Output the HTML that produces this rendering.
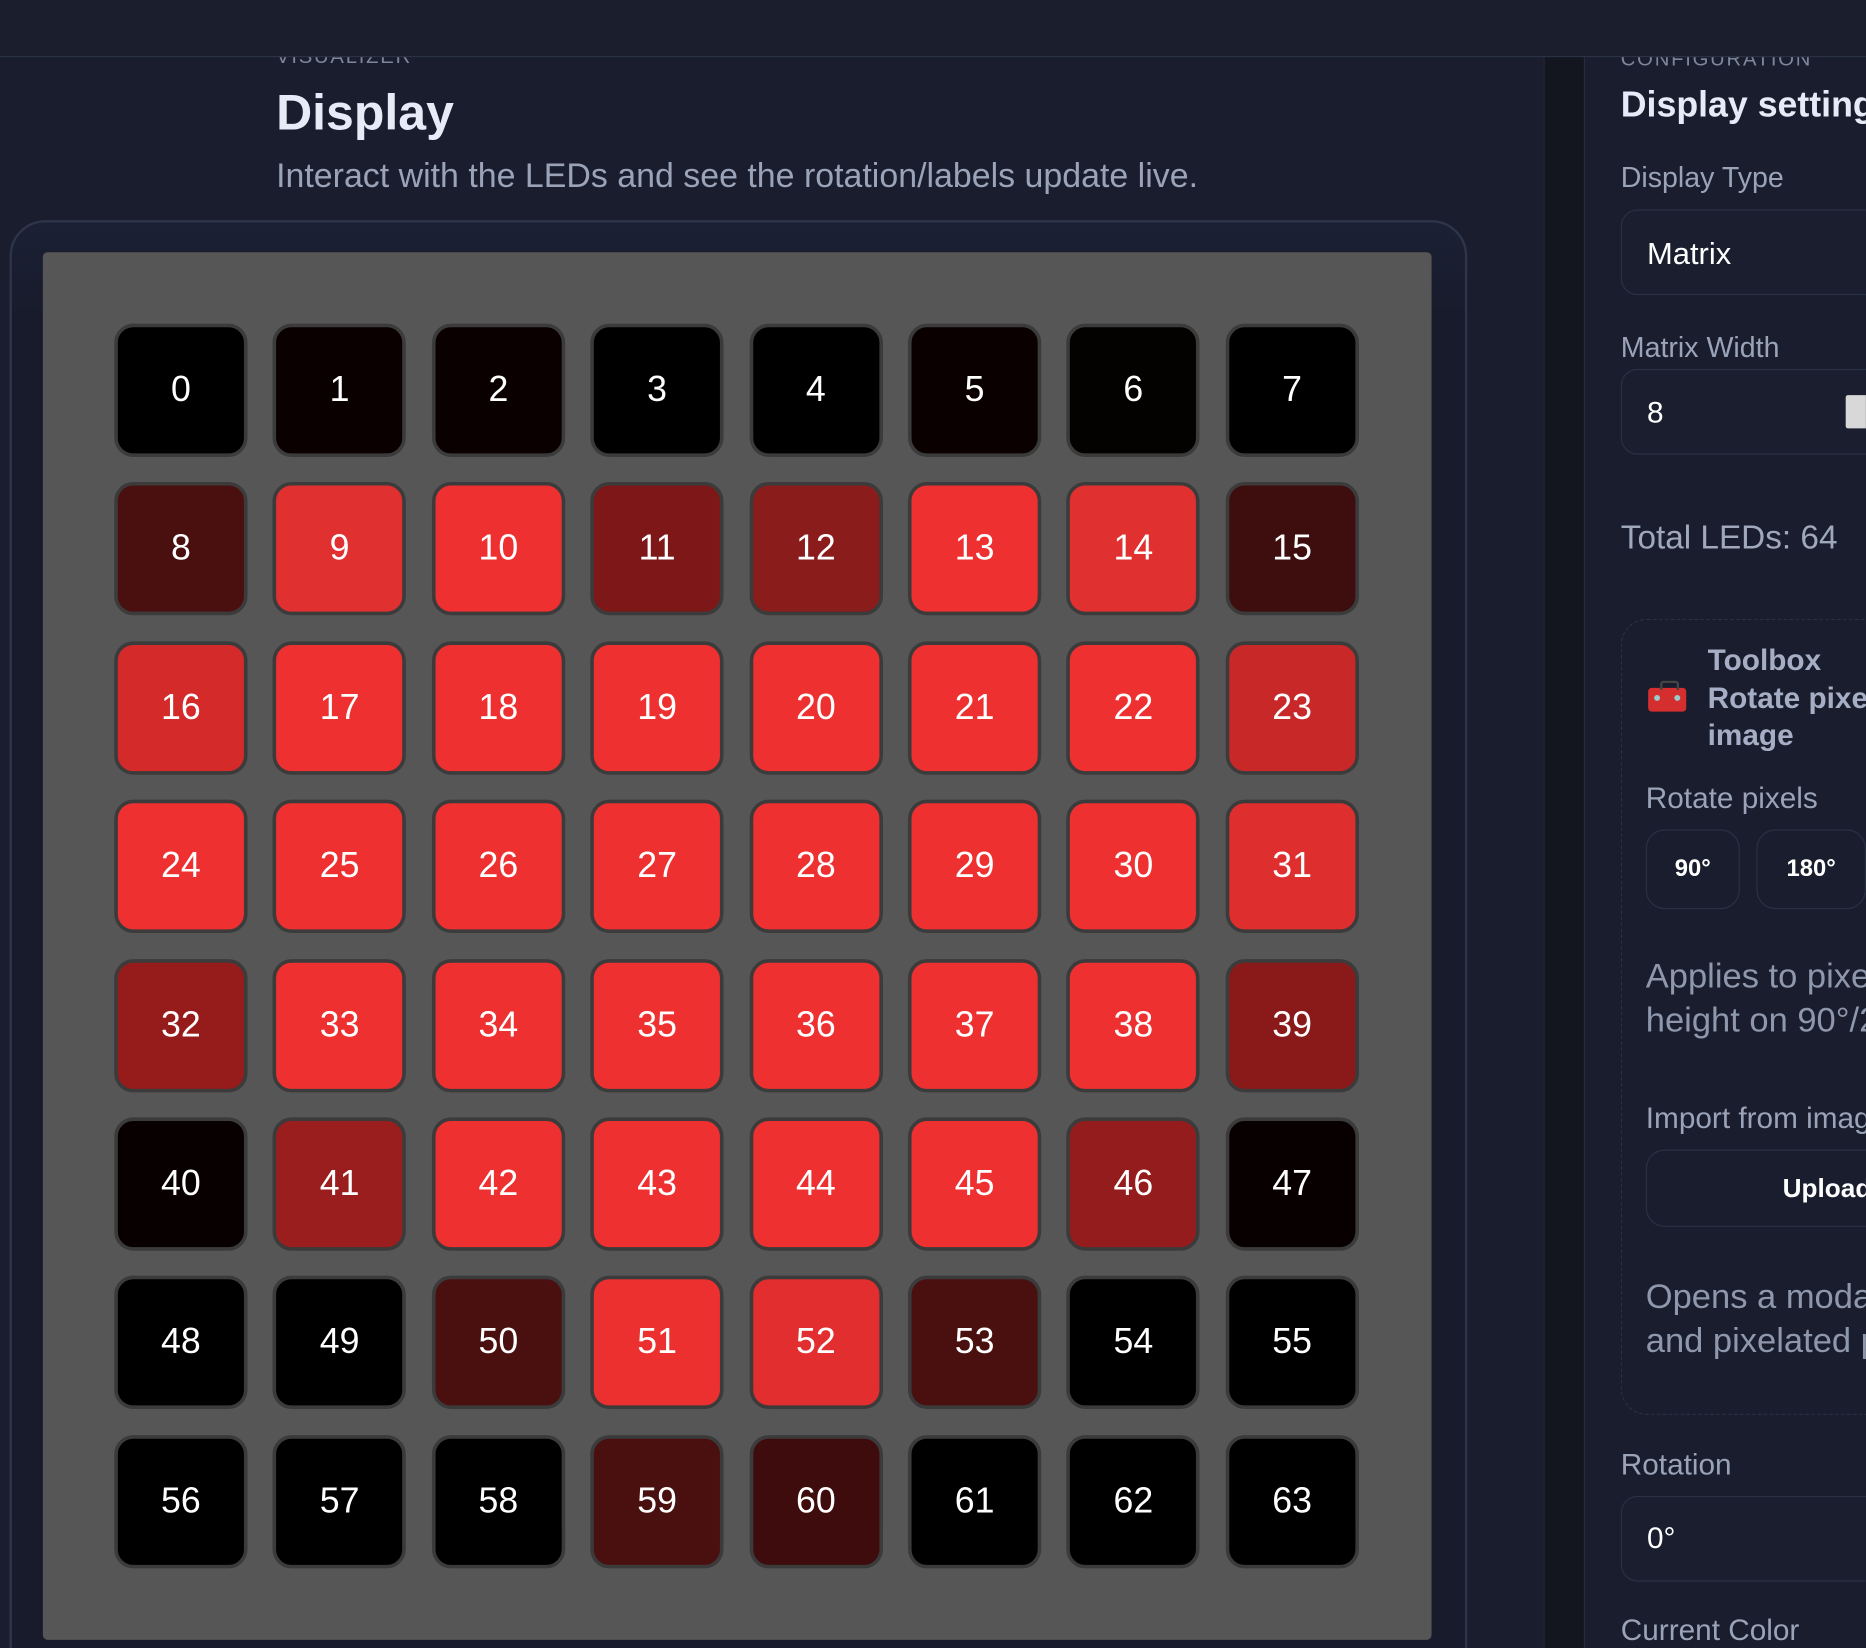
<!DOCTYPE html>
<html><head><meta charset="utf-8"><style>
html,body{margin:0;padding:0;width:1866px;height:1648px;overflow:hidden;background:#191d2d;}
#w{position:absolute;left:0;top:0;width:1568px;height:1385px;transform:scale(1.19);transform-origin:0 0;font-family:"Liberation Sans","DejaVu Sans",sans-serif;overflow:hidden;background:#191d2d;}
.a{position:absolute;white-space:nowrap;}
.top{position:absolute;left:0;top:0;width:1568px;height:47px;background:#1a1e2d;border-bottom:1px solid #2b3246;z-index:5;}
.eyebrow{font-size:17px;letter-spacing:1.5px;color:#7d869b;}
.lbl{font-size:24px;color:#9aa3b8;}
.box{position:absolute;border:1.5px solid #2a3145;border-radius:14px;background:#1a1e2e;}
.led{position:absolute;width:106px;height:106px;border:3px solid #3b3b3b;border-radius:16px;color:#fff;font-size:30px;display:flex;align-items:center;justify-content:center;}
.btn{position:absolute;border:1.5px solid #2a3145;border-radius:16px;color:#fff;font-weight:bold;font-size:20px;display:flex;align-items:center;justify-content:center;}
</style></head><body><div id="w">
<div class="top"></div>
<div class="a eyebrow" style="left:232px;top:38px;z-index:1">VISUALIZER</div>
<div class="a" style="left:232px;top:71px;font-size:42px;font-weight:bold;color:#e8ebf7">Display</div>
<div class="a" style="left:232px;top:132px;font-size:28.5px;color:#9aa3b8">Interact with the LEDs and see the rotation/labels update live.</div>
<div style="position:absolute;left:8px;top:185px;width:1221px;height:1250px;border:2px solid #2e3449;border-radius:30px;background:linear-gradient(#1b2034,#171b2b 80px);"></div>
<div style="position:absolute;left:36px;top:212px;width:1167px;height:1166px;background:#565656;border-radius:4px;"></div>
<div id="g"></div>
<div style="position:absolute;left:1297px;top:48px;width:33px;height:1337px;background:#14161f;border-left:1px solid #22273a;border-right:1px solid #262c40"></div>
<div class="a eyebrow" style="left:1362px;top:40px;z-index:1">CONFIGURATION</div>
<div class="a" style="left:1362px;top:72px;font-size:30px;font-weight:bold;color:#e8ebf7">Display settings</div>
<div class="a lbl" style="left:1362px;top:136px">Display Type</div>
<div class="box" style="left:1362px;top:176px;width:260px;height:70px"></div>
<div class="a" style="left:1384px;top:198px;font-size:26px;color:#fff">Matrix</div>
<div class="a lbl" style="left:1362px;top:279px">Matrix Width</div>
<div class="box" style="left:1362px;top:310px;width:260px;height:70px"></div>
<div class="a" style="left:1384px;top:333px;font-size:25px;color:#fff">8</div>
<div style="position:absolute;left:1551px;top:332px;width:20px;height:28px;background:#d8d8d8;border-radius:2px"></div>
<div class="a" style="left:1362px;top:436px;font-size:28px;color:#a0a8bc">Total LEDs: 64</div>
<div style="position:absolute;left:1362px;top:520px;width:300px;height:667px;border:1.5px dashed #2a3145;border-radius:22px"></div>
<div style="position:absolute;left:1385px;top:578px;width:32px;height:20px;background:#d52e2e;border-radius:3px"></div>
<div style="position:absolute;left:1395px;top:572px;width:12px;height:6px;border:2px solid #444;border-bottom:none;border-radius:3px 3px 0 0"></div>
<div style="position:absolute;left:1390px;top:584px;width:5px;height:5px;background:#9cc;border-radius:50%"></div>
<div style="position:absolute;left:1407px;top:584px;width:5px;height:5px;background:#9cc;border-radius:50%"></div>
<div class="a" style="left:1435px;top:540px;font-size:25px;font-weight:bold;color:#a5aec4;line-height:31.5px">Toolbox<br>Rotate pixels &amp;<br>image</div>
<div class="a lbl" style="left:1383px;top:657px;font-size:25px">Rotate pixels</div>
<div class="btn" style="left:1383px;top:697px;width:77px;height:65px">90°</div>
<div class="btn" style="left:1476px;top:697px;width:90px;height:65px">180°</div>
<div class="a" style="left:1383px;top:803px;font-size:29px;color:#8e97ac;line-height:37px">Applies to pixels; swaps width and<br>height on 90°/270°.</div>
<div class="a lbl" style="left:1383px;top:926px;font-size:25px">Import from image</div>
<div class="btn" style="left:1383px;top:966px;width:300px;height:65px;justify-content:flex-start;padding-left:114px;box-sizing:border-box;font-size:22px">Upload image</div>
<div class="a" style="left:1383px;top:1072px;font-size:29px;color:#8e97ac;line-height:37px">Opens a modal to crop<br>and pixelated preview</div>
<div class="a lbl" style="left:1362px;top:1217px;font-size:25px">Rotation</div>
<div class="box" style="left:1362px;top:1257px;width:260px;height:70px"></div>
<div class="a" style="left:1384px;top:1279px;font-size:25px;color:#fff">0°</div>
<div class="a lbl" style="left:1362px;top:1356px;font-size:25px">Current Color</div>
</div>
<script>
var c=["#000","#0a0000","#0a0000","#000","#000","#0a0000","#030200","#000",
"#4a1010","#e03030","#ef3030","#7e1818","#8a1c1c","#ef3030","#e03030","#3e0e0e",
"#d42a2a","#ef3030","#ef3030","#ef3030","#ef3030","#ef3030","#ef3030","#c82828",
"#ef3030","#ef3030","#ef3030","#ef3030","#ef3030","#ef3030","#ef3030","#de2e2e",
"#961c1c","#ef3030","#ef3030","#ef3030","#ef3030","#ef3030","#ef3030","#8a1a1a",
"#080000","#9a1e1e","#ef3030","#ef3030","#ef3030","#ef3030","#941c1c","#080000",
"#000","#000","#4a1010","#ec3030","#e22e2e","#4a1010","#000","#000",
"#000","#000","#000","#4a1010","#3e0c0c","#000","#000","#000"];
var h="";for(var i=0;i<64;i++){var r=Math.floor(i/8),k=i%8;
h+='<div class="led" style="left:'+(96+k*133.4)+'px;top:'+(272+r*133.4)+'px;background:'+c[i]+'">'+i+'</div>';}
document.getElementById("g").outerHTML=h;
</script>
</body></html>
